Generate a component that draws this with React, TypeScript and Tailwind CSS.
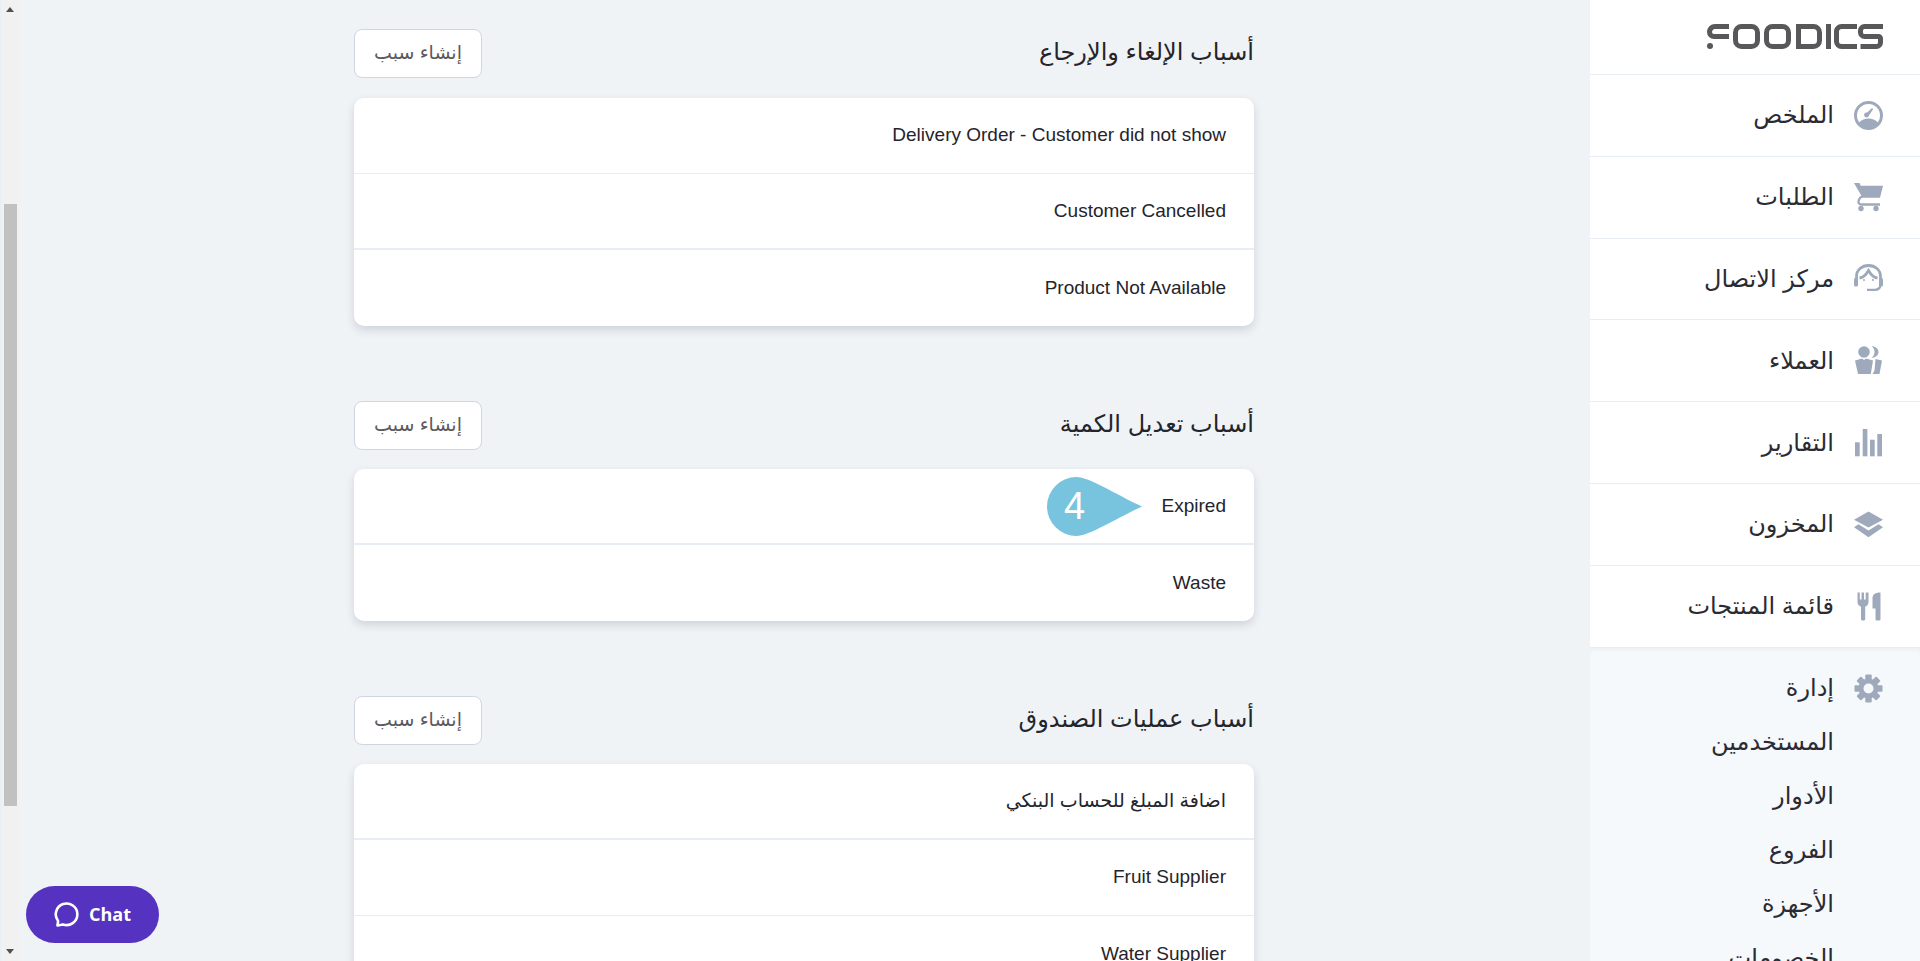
const arabic = "font-['Liberation_Sans','DejaVu_Sans',sans-serif]";

function GaugeIcon() {
  return (
    <svg viewBox="0 0 29 29" className="h-[29px] w-[29px]" fill="#9fa9bc">
      <path fillRule="evenodd" d="M14.5 0a14.5 14.5 0 1 1 0 29a14.5 14.5 0 0 1 0-29zm0 3a11.5 11.5 0 1 0 0 23a11.5 11.5 0 0 0 0-23z" />
      <path d="M5 21.5a13.500 13.500 0 0 1 19 0a11.500 11.500 0 0 1-19 0z" />
      <circle cx="12.500" cy="14" r="2.400" />
      <path d="M11.500 13l6.500-6l1.200 1l-5 7.500z" />
    </svg>
  );
}

function CartIcon() {
  return (
    <svg viewBox="0 0 29 29" className="h-[29px] w-[29px]" fill="#9fa9bc">
      <path d="M0 0h5.500l1.300 2.800H29l-3 12H8.500z" />
      <path d="M8.500 13.500C4 15 2.800 21.500 7.500 21.500H26" fill="none" stroke="#9fa9bc" strokeWidth="2.300" />
      <circle cx="7" cy="25.500" r="2.700" />
      <circle cx="22" cy="25.500" r="2.700" />
    </svg>
  );
}

function HeadsetIcon() {
  return (
    <svg viewBox="0 0 29 29" className="h-[29px] w-[29px]" fill="#9fa9bc">
      <g fill="none" stroke="#9fa9bc" strokeWidth="2.800">
        <path d="M2.500 16v-3.500C2.500 6 8 1.500 14.500 1.500S26.500 6 26.500 12.500V16" />
        <path d="M5.500 14C9.500 13.500 12.500 10 14.500 6.500C16.500 10 19.500 13.500 23.500 14" />
        <path d="M26.500 21C26 25 23.500 25.800 21 25.800H13" strokeWidth="2.300" />
      </g>
      <rect x="0" y="14" width="4" height="8.500" rx="1.500" />
      <rect x="25" y="14" width="4" height="8.500" rx="1.500" />
      <circle cx="10" cy="16" r="1" />
      <circle cx="19" cy="16" r="1" />
    </svg>
  );
}

function UsersIcon() {
  return (
    <svg viewBox="0 0 29 29" className="h-[29px] w-[29px]" fill="#9fa9bc">
      <circle cx="10" cy="6" r="5.800" />
      <path d="M17.500 0c4 .3 7 3 7 6s-3 5.700-7 6c2-1.500 3-3.700 3-6s-1-4.500-3-6z" />
      <path d="M1 14.500L8 12.500L10 14L12 12.500L19 14.500L16.800 28H4z" />
      <path d="M21.500 13L28 14.500L25.500 28H18.500L20.500 24.500z" />
    </svg>
  );
}

function BarsIcon() {
  return (
    <svg viewBox="0 0 29 29" className="h-[29px] w-[29px]" fill="#9fa9bc">
      <rect x="1" y="14.300" width="4.700" height="14" />
      <rect x="8.700" y="1" width="4.700" height="27.300" />
      <rect x="16" y="11.700" width="4.700" height="16.600" />
      <rect x="23.300" y="6" width="4.700" height="22.300" />
    </svg>
  );
}

function LayersIcon() {
  return (
    <svg viewBox="0 0 29 29" className="h-[29px] w-[29px]" fill="#9fa9bc">
      <path d="M14.500 1.500L29 9.800L14.500 17.500L0 9.800z" />
      <path d="M4.500 14.200L14.500 20.500L24.500 14.200L29 17.200L14.500 27.200L0 17.200z" />
    </svg>
  );
}

function CutleryIcon() {
  return (
    <svg viewBox="0 0 29 29" className="h-[29px] w-[29px]" fill="#9fa9bc">
      <path d="M3.500 0.500h2.300v7h1.700v-7h2.500v7h1.700v-7h2.800V10c0 2.500-1.500 4-3.300 4.800V27a1.500 1.500 0 0 1-1.500 1.500H8.500A1.500 1.500 0 0 1 7 27V14.800C5 14 3.500 12.500 3.500 10z" />
      <path d="M18.500 6.500C18.500 2.500 21 .5 26.500.5V27a1.500 1.500 0 0 1-1.500 1.500h-2A1.500 1.500 0 0 1 21.500 27V16.500h-3z" />
    </svg>
  );
}

function GearIcon() {
  return (
    <svg viewBox="0 0 29 29" className="h-[29px] w-[29px]" fill="#9fa9bc">
      {[0, 45, 90, 135].map((deg) => (
        <rect key={deg} x="11.300" y="0.500" width="6.400" height="28" rx="1" transform={`rotate(${deg} 14.500 14.500)`} />
      ))}
      <circle cx="14.500" cy="14.500" r="10" />
      <circle cx="14.500" cy="14.500" r="5" fill="#f6f9fc" />
    </svg>
  );
}

function Logo() {
  return (
    <svg viewBox="0 0 176 25" className="h-[25px] w-[176px]" fill="none" stroke="#58585a" strokeWidth="5">
      <path d="M22 2.500H8a5.500 5.500 0 0 0-5.500 5.500a4.500 4.500 0 0 0 4.500 4.500h15" />
      <circle cx="3" cy="22" r="3" fill="#58585a" stroke="none" />
      <rect x="28.500" y="2.500" width="22" height="20" rx="6" />
      <rect x="59.500" y="2.500" width="22" height="20" rx="6" />
      <path d="M91.500 2.500h15a6 6 0 0 1 6 6v8a6 6 0 0 1-6 6h-15z" />
      <path d="M121.500 0v25" />
      <path d="M150 2.500h-15.500a5 5 0 0 0-5 5v10a5 5 0 0 0 5 5H150" />
      <path d="M176 2.500h-18.500a4 4 0 0 0-4 4v2a4 4 0 0 0 4 4h14a2 2 0 0 1 2 2v4a4 4 0 0 1-4 4h-16" />
    </svg>
  );
}

const navItems = [
  { label: "الملخص", Icon: GaugeIcon },
  { label: "الطلبات", Icon: CartIcon },
  { label: "مركز الاتصال", Icon: HeadsetIcon },
  { label: "العملاء", Icon: UsersIcon },
  { label: "التقارير", Icon: BarsIcon },
  { label: "المخزون", Icon: LayersIcon },
  { label: "قائمة المنتجات", Icon: CutleryIcon },
];

const subItems = ["المستخدمين", "الأدوار", "الفروع", "الأجهزة", "الخصومات"];

function Sidebar() {
  return (
    <aside className="h-full w-[330px] shrink-0 overflow-hidden bg-white">
      <div className="flex h-[75px] items-center justify-end border-b border-[#e8ecf5] pr-[37px] pb-[1px]">
        <Logo />
      </div>
      {navItems.map(({ label, Icon }) => (
        <div
          key={label}
          dir="rtl"
          className="flex h-[81.8px] items-center gap-[20px] border-b border-[#e8ecf5] pr-[37px]"
        >
          <Icon />
          <span className="text-[24px] leading-none text-[#2b2b33]">{label}</span>
        </div>
      ))}
      <div dir="rtl" className="h-[320px] bg-[#f6f9fc] pt-[26px] pr-[37px] shadow-[inset_0_4px_6px_-4px_rgba(0,0,0,0.08)]">
        <div className="flex h-[29px] items-center gap-[20px]">
          <GearIcon />
          <span className="text-[24px] leading-none text-[#2b2b33]">إدارة</span>
        </div>
        <div className="mt-[21px] flex flex-col gap-[18px] pr-[49px]">
          {subItems.map((s) => (
            <div key={s} className="h-[36px] text-[24px] leading-[36px] text-[#2b2b33]">
              {s}
            </div>
          ))}
        </div>
      </div>
    </aside>
  );
}

type RowData = { text: string; border?: "thin" | "thick"; marker?: boolean };

function Row({ text, border, marker }: RowData) {
  return (
    <div
      dir="rtl"
      className={`relative flex h-[76px] items-center pr-[28px] text-[19px] text-[#24242c] ${
        border === "thick" ? "border-b-2 border-[#e8ecf5]" : border === "thin" ? "border-b border-[#e8ecf5]" : ""
      }`}
    >
      {text}
      {marker && (
        <div className="absolute top-[8px] left-[693px] h-[59px] w-[95px]">
          <svg viewBox="0 0 95 59" className="h-full w-full">
            <path d="M29.500 0C42 0 68 17 95 29.500C68 42 42 59 29.500 59a29.500 29.500 0 0 1 0-59z" fill="#78c4de" />
          </svg>
          <span className="absolute top-0 left-[17px] text-[38px] leading-[59px] text-white">4</span>
        </div>
      )}
    </div>
  );
}

function Section({ title, rows, top, cardGap }: { title: string; rows: RowData[]; top: string; cardGap: string }) {
  return (
    <section className={top}>
      <div className={`flex items-center justify-between ${cardGap}`}>
        <button
          type="button"
          className="h-[49px] w-[128px] rounded-[8px] border border-[#cdd6e2] bg-white text-[19px] text-[#5c5860]"
        >
          إنشاء سبب
        </button>
        <h2 className="pb-[4px] text-[24px] font-normal text-[#24242c]">{title}</h2>
      </div>
      <div className="overflow-hidden rounded-[10px] bg-white shadow-[0_4px_8px_rgba(60,72,100,0.18)]">
        {rows.map((r) => (
          <Row key={r.text} {...r} />
        ))}
      </div>
    </section>
  );
}

function ScrollTrack() {
  return (
    <div className="flex h-full w-[19px] shrink-0 flex-col items-center border-l border-[#e8eef6] bg-[#f1f1f1]">
      <div className="mt-[7px] h-0 w-0 border-x-[4px] border-b-[5px] border-x-transparent border-b-[#505050]" />
      <div className="mt-[192px] h-[602px] w-[13px] bg-[#c1c1c1]" />
      <div className="mt-[143px] h-0 w-0 border-x-[4px] border-t-[5px] border-x-transparent border-t-[#505050]" />
    </div>
  );
}

export default function App() {
  return (
    <div className={`relative flex h-[961px] w-[1920px] overflow-hidden bg-[#eff3f6] ${arabic}`}>
      <ScrollTrack />
      <main className="w-[1571px] shrink-0 overflow-hidden pl-[335px]">
        <div className="w-[900px]">
          <Section
            top="pt-[29px]"
            cardGap="mb-[20px]"
            title="أسباب الإلغاء والإرجاع"
            rows={[
              { text: "Delivery Order - Customer did not show", border: "thin" },
              { text: "Customer Cancelled", border: "thick" },
              { text: "Product Not Available" },
            ]}
          />
          <Section
            top="pt-[75px]"
            cardGap="mb-[19px]"
            title="أسباب تعديل الكمية"
            rows={[{ text: "Expired", border: "thick", marker: true }, { text: "Waste" }]}
          />
          <Section
            top="pt-[75px]"
            cardGap="mb-[19px]"
            title="أسباب عمليات الصندوق"
            rows={[
              { text: "اضافة المبلغ للحساب البنكي", border: "thick" },
              { text: "Fruit Supplier", border: "thin" },
              { text: "Water Supplier" },
            ]}
          />
        </div>
      </main>
      <Sidebar />
      <button
        type="button"
        className="absolute top-[886px] left-[26px] flex h-[57px] w-[133px] items-center justify-center gap-[10px] rounded-full bg-[#5632c1] font-['Open_Sans',sans-serif] text-[18px] font-bold text-white"
      >
        <svg viewBox="0 0 25 25" className="h-[25px] w-[25px]" fill="none" stroke="white" strokeWidth="2.600">
          <path d="M3.500 23.500l.6-4.500A10.800 10.800 0 1 1 9 22.500z" strokeLinejoin="round" />
        </svg>
        Chat
      </button>
    </div>
  );
}
